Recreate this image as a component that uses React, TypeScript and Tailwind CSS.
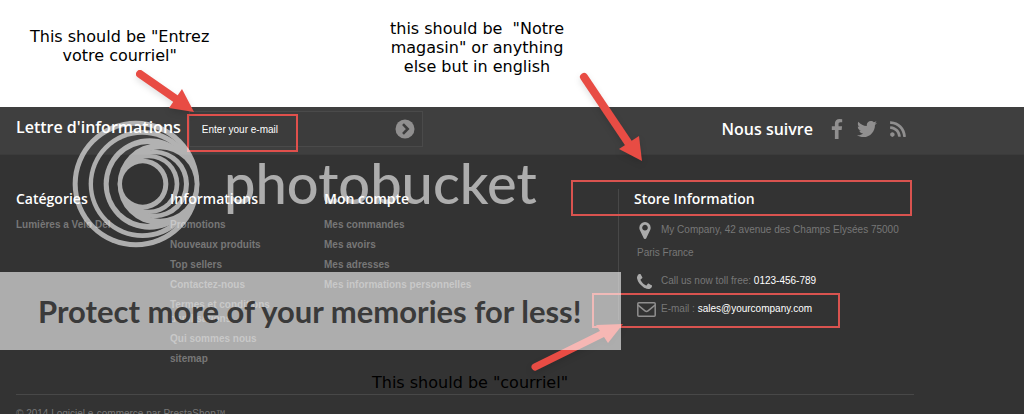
import { FaTwitter, FaRss } from "react-icons/fa";

const informations = [
  "Promotions",
  "Nouveaux produits",
  "Top sellers",
  "Contactez-nous",
  "Termes et conditions d'utilisations.",
  "Qui sommes nous",
  "sitemap",
];

const compte = ["Mes commandes", "Mes avoirs", "Mes adresses", "Mes informations personnelles"];

// [left, right, fill] of each disc in the watermark logo, back to front
const discs: [number, number, string][] = [
  [22, 402, "white"],
  [37, 386, "black"],
  [70, 394, "white"],
  [83, 378, "black"],
  [115, 390, "white"],
  [130, 370, "black"],
  [157, 402, "white"],
  [180, 388, "black"],
  [166, 371, "white"],
  [177, 356, "black"],
  [162, 342, "white"],
  [174, 328, "black"],
  [157, 309, "white"],
  [170, 294, "black"],
];

function LinkColumn({ title, links, className }: { title: string; links: string[]; className: string }) {
  return (
    <div className={className}>
      <h4 className="font-['Open_Sans',sans-serif] text-sm font-semibold leading-5 text-white">{title}</h4>
      <ul className="mt-1.5 text-[10px] font-bold leading-[14px] text-[#777777]">
        {links.map((link) => (
          <li key={link} className="py-[3px]">
            <a href="#" className="block">{link}</a>
          </li>
        ))}
      </ul>
    </div>
  );
}

function Logo() {
  return (
    <svg viewBox="20 24 384 384" className="size-32 shrink-0">
      <mask id="rings" maskUnits="userSpaceOnUse" x="20" y="24" width="384" height="384">
        {discs.map(([left, right, fill], i) => (
          <circle key={i} cx={(left + right) / 2} cy="216" r={(right - left) / 2} fill={fill} />
        ))}
      </mask>
      <rect x="20" y="24" width="384" height="384" fill="currentColor" mask="url(#rings)" />
    </svg>
  );
}

export default function App() {
  return (
    <div className="relative h-screen overflow-hidden bg-white font-['Liberation_Sans',Arial,sans-serif]">
      <div className="h-[107px]"></div>

      <footer className="bg-[#333333]">
        <div className="flex h-12 items-center border-b border-[#3b3b3b] bg-[#3f3f3f] pl-4 pr-[117px]">
          <label htmlFor="newsletter" className="mb-2 font-['Open_Sans',sans-serif] text-base font-semibold text-white">
            Lettre d'informations
          </label>
          <form className="mb-1 ml-2 flex h-9 w-[234px] items-center border border-[#4a4a4a] bg-[#3c3c3c] pl-3 pr-[7px]">
            <input id="newsletter" type="text" placeholder="Enter your e-mail" className="mt-0.5 min-w-0 flex-1 bg-transparent text-[10px] text-white outline-none placeholder:text-white" />
            <button type="button" aria-label="OK" className="text-[#908f8f]">
              <svg viewBox="0 0 20 20" className="size-5">
                <circle cx="10" cy="10" r="9.5" fill="currentColor" />
                <path d="M8 5.2 12.7 10 8 14.8" fill="none" stroke="#3c3c3c" strokeWidth="2.6" />
              </svg>
            </button>
          </form>
          <div className="mb-1 ml-auto flex items-center text-[#908f8f]">
            <h4 className="mr-4 font-['Open_Sans',sans-serif] text-base font-semibold text-white">Nous suivre</h4>
            <a href="#" aria-label="Facebook" className="mr-3">
              <svg viewBox="95 0 864 1664" className="h-5 w-4" fill="currentColor">
                <path d="M959 12v264h-157q-86 0-116 36t-30 108v189h293l-39 296h-254v759h-306v-759h-255v-296h255v-218q0-186 104-288.5t277-102.5q147 0 228 12z" />
              </svg>
            </a>
            <a href="#" aria-label="Twitter" className="mr-3"><FaTwitter className="size-5" /></a>
            <a href="#" aria-label="RSS"><FaRss className="size-[18px]" /></a>
          </div>
        </div>

        <div className="flex px-4 pb-[25px] pt-[34px]">
          <LinkColumn title="Catégories" links={["Lumières a Velo Del"]} className="w-[154px]" />
          <LinkColumn title="Informations" links={informations} className="w-[154px] pr-10" />
          <LinkColumn title="Mon compte" links={compte} className="w-[294px]" />
          <div className="w-[294px] self-start border-l border-[#484848] pl-[15px]">
            <h4 className="font-['Open_Sans',sans-serif] text-sm font-semibold leading-5 text-white">Store Information</h4>
            <ul className="ml-[3px] mt-[9px] space-y-[5px] text-[10px] leading-[23px] text-[#777777]">
              <li>
                <span className="inline-block w-6">
                  <svg viewBox="0 128 1024 1536" className="ml-0.5 inline h-[17px] w-3 text-[#aaaaaa]" fill="currentColor">
                    <path d="M768 640q0-106-75-181t-181-75-181 75-75 181 75 181 181 75 181-75 75-181zm256 0q0 109-33 179l-364 774q-16 33-47.5 52t-67.5 19-67.5-19-46.5-52l-365-774q-33-70-33-179 0-212 150-362t362-150 362 150 150 362z" />
                  </svg>
                </span>
                My Company, 42 avenue des Champs Elysées 75000 Paris France
              </li>
              <li>
                <span className="inline-block w-6">
                  <svg viewBox="0 128 1408 1408" className="inline size-[15px] text-[#aaaaaa]" fill="currentColor">
                    <path d="M1408 1240q0 27-10 70.5t-21 68.5q-21 50-122 106-94 51-186 51-27 0-52.5-3.5t-57.5-12.5-47.5-14.5-55.5-20.5-49-18q-98-35-175-83-128-79-264.5-215.5t-215.5-264.5q-48-77-83-175-3-9-18-49t-20.5-55.5-14.5-47.5-12.5-57.5-3.5-52.5q0-92 51-186 56-101 106-122 25-11 68.5-21t70.5-10q14 0 21 3 18 6 53 76 11 19 30 54t35 63.5 31 53.5q3 4 17.5 25t21.5 35.5 7 28.5q0 20-28.5 50t-62 55-62 53-28.5 46q0 9 5 22.5t8.5 20.5 14 24 11.5 19q76 137 174 235t235 174q2 1 19 11.5t24 14 20.5 8.5 22.5 5q18 0 46-28.5t53-62 55-62 50-28.5q14 0 28.5 7t35.5 21.5 25 17.5q25 15 53.5 31t63.5 35 54 30q70 35 76 53 3 7 3 21z" />
                  </svg>
                </span>
                Call us now toll free: <span className="text-white">0123-456-789</span>
              </li>
              <li>
                <span className="inline-block w-6">
                  <svg viewBox="0 0 19 15" className="inline h-[15px] w-[19px] text-[#908f8f]" fill="none" stroke="currentColor" strokeWidth="1.5">
                    <rect x="0.8" y="0.8" width="17.4" height="13.4" rx="1" />
                    <path d="M1 3.2 8 8.8Q9.5 10 11 8.8L18 3.2" />
                  </svg>
                </span>
                E-mail : <a href="#" className="text-white">sales@yourcompany.com</a>
              </li>
            </ul>
          </div>
        </div>

        <div className="ml-4 mr-[110px] border-t border-[#484848] pb-4 pt-3">
          <p className="text-[10px] leading-[14px] text-[#777777]">© 2014 Logiciel e-commerce par PrestaShop™</p>
        </div>
      </footer>

      <p className="absolute left-[30px] top-[27px] text-center font-['DejaVu_Sans',sans-serif] text-base leading-[19px] text-black">
        This should be "Entrez<br />votre courriel"
      </p>
      <p className="absolute left-[390px] top-[19px] whitespace-pre text-center font-['DejaVu_Sans',sans-serif] text-base leading-[19px] text-black">
        this should be  "Notre<br />magasin" or anything<br />else but in english
      </p>
      <p className="absolute left-[372px] top-[373px] font-['DejaVu_Sans',sans-serif] text-base leading-[19px] text-black">
        This should be "courriel"
      </p>

      <span className="absolute left-[187px] top-[114px] h-[38px] w-[111px] border-2 border-[#e0504c]"></span>
      <span className="absolute left-[571px] top-[180px] h-[36px] w-[341px] border-2 border-[#d9534f]"></span>
      <span className="absolute left-[592px] top-[293px] h-[35px] w-[248px] border-2 border-[#d9534f]"></span>

      <svg viewBox="0 0 1024 414" className="absolute left-0 top-0 h-[414px] w-[1024px] drop-shadow-md" fill="#e84c44">
        <path d="M140 74 176 99" stroke="#e84c44" strokeWidth="8" strokeLinecap="round" />
        <path d="M194 112 182 89 169 108Z" />
        <path d="M584 77 629 144" stroke="#e84c44" strokeWidth="8" strokeLinecap="round" />
        <path d="M642 161 639 136 619 149Z" />
        <path d="M535 367 604 333" stroke="#e84c44" strokeWidth="7" strokeLinecap="round" />
        <path d="M623 324 596 325 608 343Z" />
      </svg>

      <div className="absolute left-[72px] top-[120px] flex items-start text-white opacity-60">
        <Logo />
        <span className="ml-6 mt-[29px] font-['Lato',sans-serif] text-[56px] font-medium leading-[68px]">photobucket</span>
      </div>
      <div className="absolute left-0 top-[272px] h-[78px] w-[621px] bg-white/60 pl-[38px] font-['Lato',sans-serif] text-[31px] font-bold leading-[78px] text-[#3a3a3a]">
        Protect more of your memories for less!
      </div>
    </div>
  );
}
